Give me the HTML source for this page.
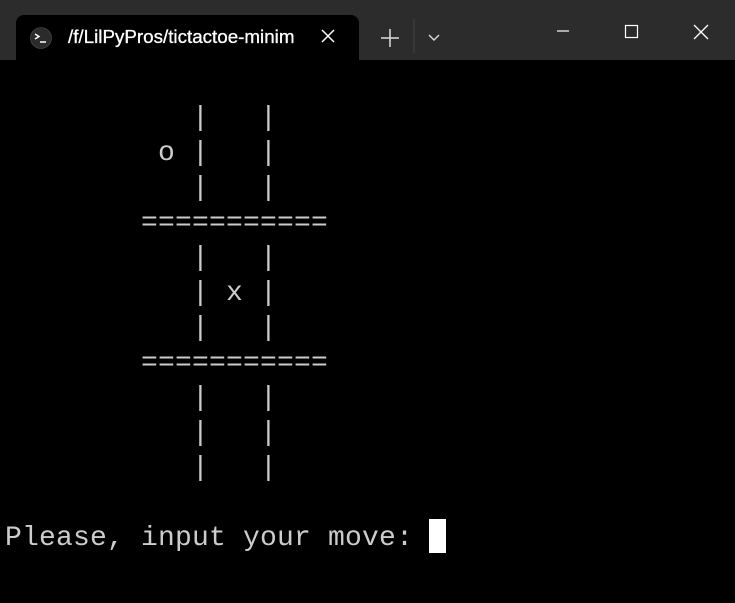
<!DOCTYPE html>
<html><head><style>
html,body{margin:0;padding:0;width:735px;height:603px;background:#000;overflow:hidden}
.bar{position:absolute;left:0;top:0;width:735px;height:60px;background:#2c2c2c}
.tab{position:absolute;left:16px;top:15px;width:343px;height:45px;background:#000;border-radius:8px 8px 0 0}
.tt{position:absolute;left:68px;top:26px;font:18.8px "Liberation Sans",sans-serif;color:#fff;-webkit-text-stroke:0.3px #fff}
pre{position:absolute;left:5px;top:101px;margin:0;font:28px/35px "Liberation Mono",monospace;letter-spacing:0.2px;color:#cccccc}
.cur{position:absolute;left:429px;top:519px;width:17px;height:34px;background:#fff}
</style></head><body>
<div class="bar"></div>
<div class="tab"></div>
<svg style="position:absolute;left:0;top:0" width="735" height="60">
<circle cx="41" cy="38" r="10.5" fill="#2b2b2b" stroke="#555" stroke-width="0.6"/>
<path d="M35 34l4 2.5-4 2.5M40 42h6" stroke="#fff" stroke-width="1.4" fill="none"/>
<path d="M322 30l12 12M334 30l-12 12" stroke="#fff" stroke-width="1.5"/>
<path d="M390 29v18M381 38h18" stroke="#ddd" stroke-width="1.5"/>
<path d="M414 19v34" stroke="#444" stroke-width="1"/>
<path d="M429 35l5 5 5-5" stroke="#ddd" stroke-width="1.4" fill="none"/>
<path d="M557 31h12" stroke="#fff" stroke-width="1.2"/>
<rect x="625.5" y="25.5" width="12" height="12" stroke="#fff" stroke-width="1.2" fill="none"/>
<path d="M694 25l14 14M708 25l-14 14" stroke="#fff" stroke-width="1.3"/>
</svg>
<div class="tt">/f/LilPyPros/tictactoe-minim</div>
<pre>           |   |
         o |   |
           |   |
        ===========
           |   |
           | x |
           |   |
        ===========
           |   |
           |   |
           |   |

Please, input your move: </pre>
<div class="cur"></div>
</body></html>
